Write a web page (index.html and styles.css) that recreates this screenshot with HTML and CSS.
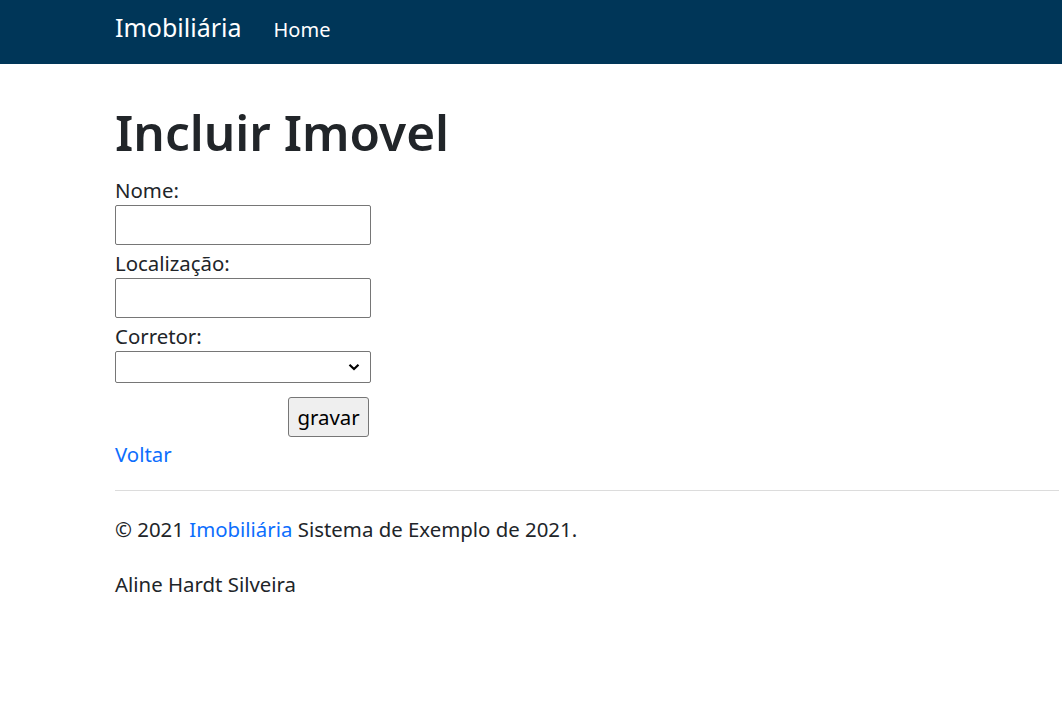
FILE: index.html
```html
<!DOCTYPE html>
<html lang="pt-BR">
<head>
<meta charset="utf-8">
<title>Incluir Imovel - Imobiliária</title>
<link rel="stylesheet" href="styles.css">
</head>
<body>
<header class="navbar">
  <a class="brand" href="#">Imobiliária</a>
  <a class="nav-link" href="#">Home</a>
</header>
<main class="container">
  <h1 class="title">Incluir Imovel</h1>
  <form class="form">
    <label class="label" for="nome">Nome:</label>
    <input class="field" id="nome" type="text">
    <label class="label gap" for="loc">Localização:</label>
    <input class="field" id="loc" type="text">
    <label class="label gap" for="cor">Corretor:</label>
    <div class="select-wrap">
      <select class="select" id="cor"><option></option></select>
      <svg class="chevron" width="12" height="8" viewBox="0 0 12 8"><path d="M1.5 1.8 L6 6 L10.5 1.8" fill="none" stroke="#000" stroke-width="2.2"/></svg>
    </div>
    <button class="btn" type="button">gravar</button>
  </form>
  <a class="back" href="#">Voltar</a>
  <hr class="rule">
  <footer class="footer">
    <p class="foot-line">© 2021 <a class="link" href="#">Imobiliária</a> Sistema de Exemplo de 2021.</p>
    <p class="foot-line author">Aline Hardt Silveira</p>
  </footer>
</main>
</body>
</html>
```
FILE: styles.css
```css
html, body {
  margin: 0;
  padding: 0;
  background: #fff;
}
body {
  font-family: "Noto Sans", "Open Sans", sans-serif;
  font-size: 20.4px;
  line-height: 30px;
  color: #212529;
}
a {
  text-decoration: none;
}
.navbar {
  height: 64px;
  box-sizing: border-box;
  background: #003658;
  display: flex;
  align-items: baseline;
  padding: 15px 0 0 115px;
}
.brand {
  color: #fff;
  font-size: 25px;
  line-height: 25px;
  margin-right: 32px;
}
.nav-link {
  color: #fff;
  font-size: 20px;
  line-height: 20px;
}
.container {
  padding: 36px 3px 0 115px;
}
.title {
  margin: 0 0 11px;
  font-size: 49.5px;
  line-height: 64px;
  font-weight: 560;
  color: #212529;
}
.form {
  display: flex;
  flex-direction: column;
  align-items: flex-start;
}
.label {
  display: block;
  height: 30px;
}
.label.gap {
  margin-top: 3px;
}
.field {
  box-sizing: border-box;
  width: 256px;
  height: 40px;
  margin: 0;
  border: 1px solid #767676;
  border-radius: 2px;
  background: #fff;
  font: inherit;
  padding: 0 4px;
}
.select-wrap {
  position: relative;
  width: 256px;
  height: 32px;
}
.select {
  box-sizing: border-box;
  width: 256px;
  height: 32px;
  margin: 0;
  border: 1px solid #767676;
  border-radius: 2px;
  background: #fff;
  -webkit-appearance: none;
  appearance: none;
  font: inherit;
}
.chevron {
  position: absolute;
  right: 11px;
  top: 12px;
  pointer-events: none;
}
.btn {
  box-sizing: border-box;
  margin: 14px 0 0 173px;
  width: 81px;
  height: 40px;
  padding: 0;
  border: 1px solid #767676;
  border-radius: 3px;
  background: #efefef;
  color: #000;
  font: inherit;
  line-height: 36px;
}
.back {
  display: block;
  margin-top: 2px;
  width: max-content;
  color: #0d6efd;
}
.rule {
  margin: 21px 0 0;
  border: 0;
  border-top: 1px solid #dcdcdc;
  height: 0;
}
.footer {
  padding-top: 23px;
}
.foot-line {
  margin: 0;
}
.author {
  margin-top: 25px;
}
.link {
  color: #0d6efd;
}
```
